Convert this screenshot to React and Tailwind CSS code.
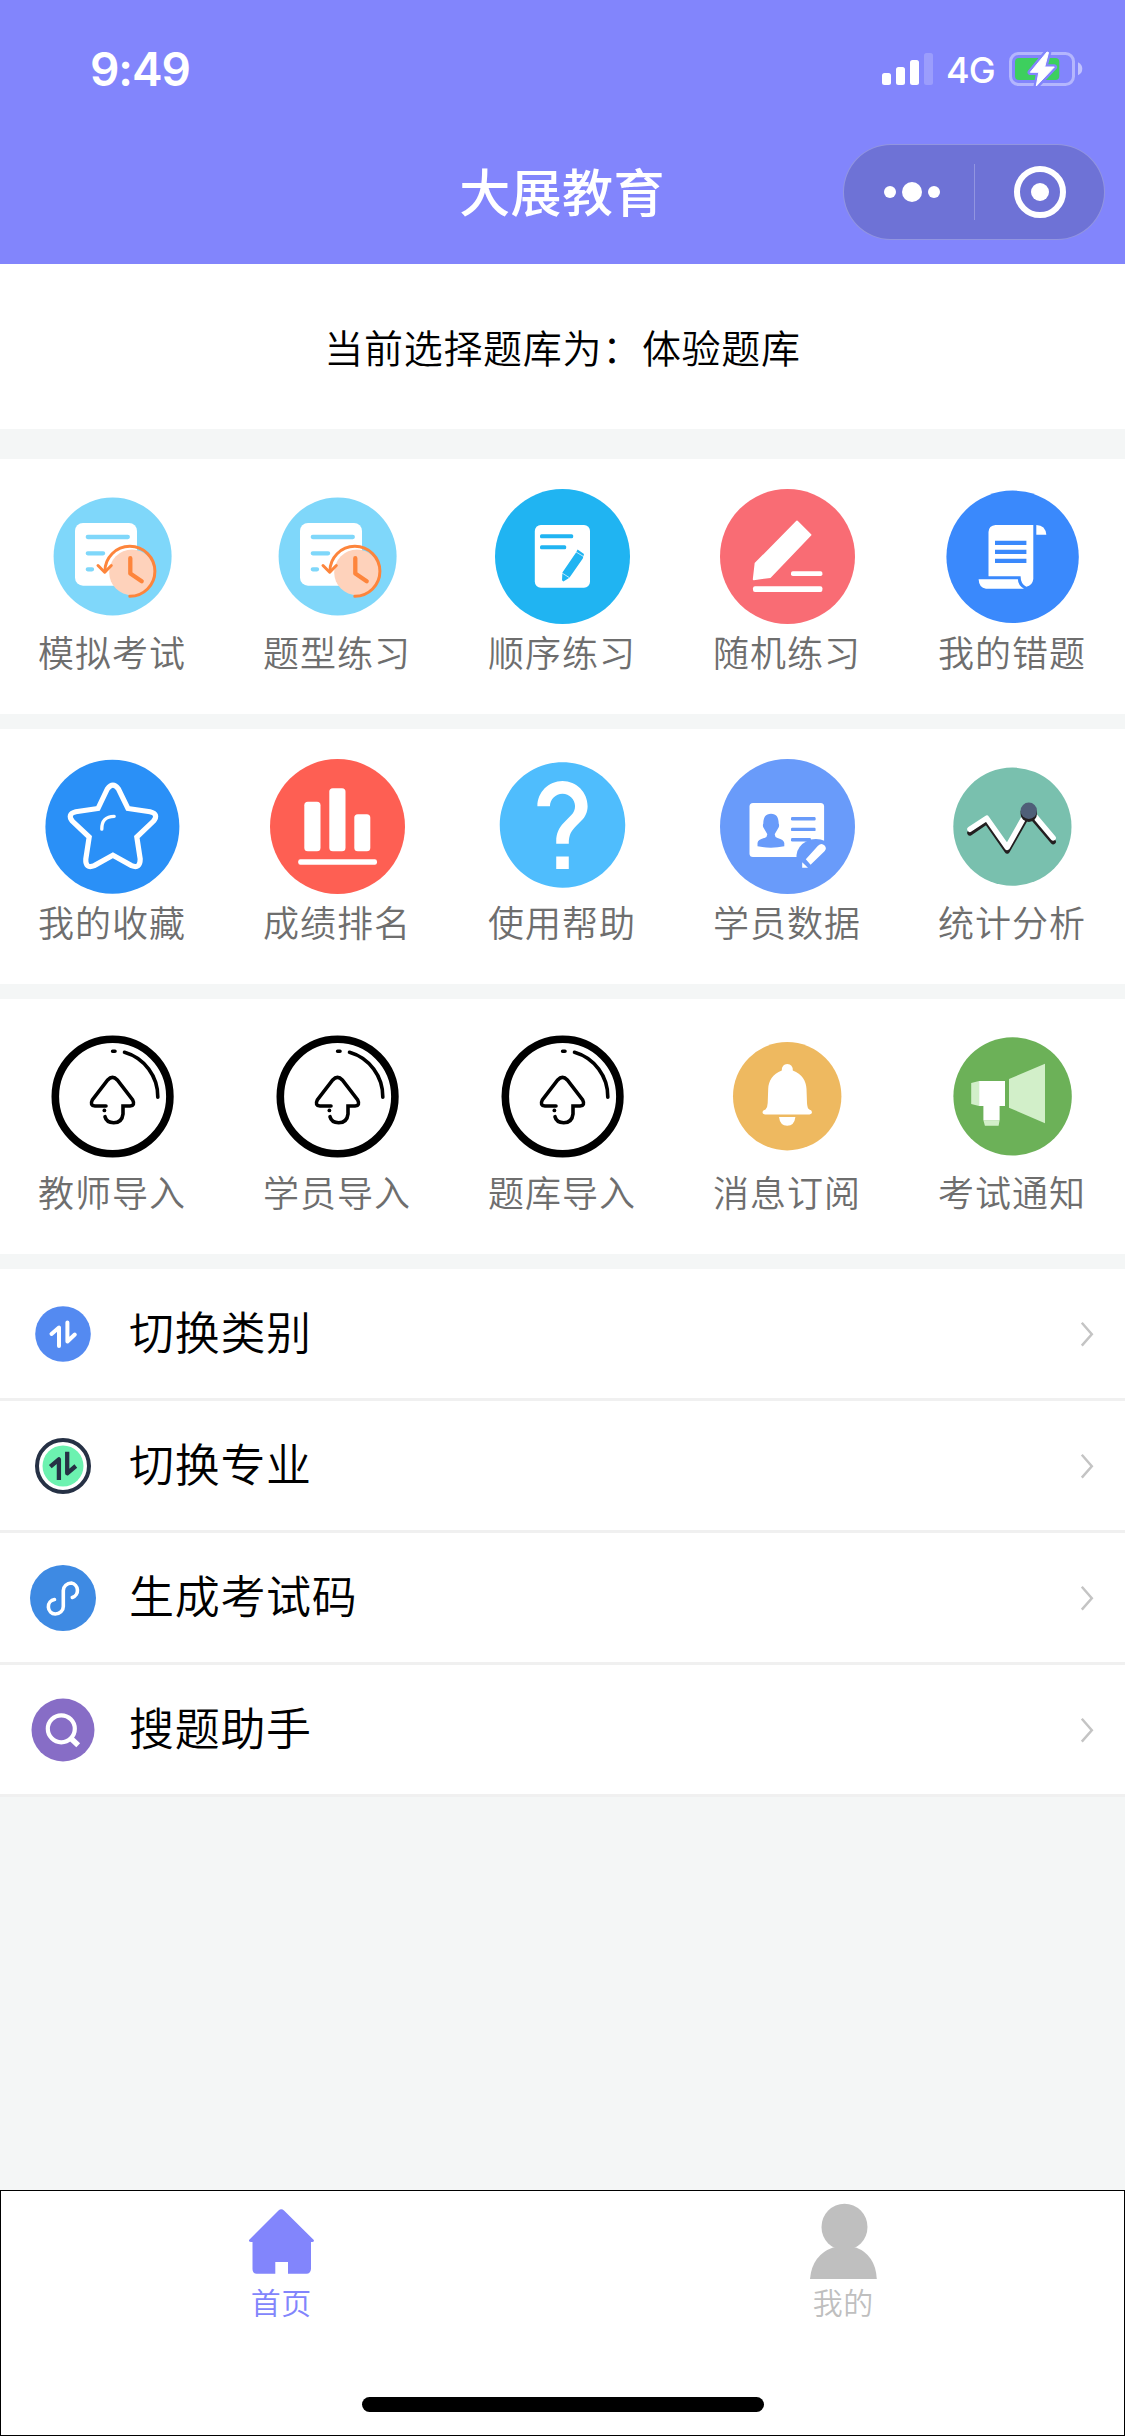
import React from 'react';
import { MdHelp } from 'react-icons/md';

const ExamIcon = () => (
    <svg className="w-[135px] h-[135px]" viewBox="0 0 135 135" fill="none" strokeLinecap="round" strokeLinejoin="round">
        <circle cx="67.6" cy="67.4" r="59" fill="#7fd7fa" />
        <rect x="30" y="34" width="62" height="62.7" rx="8" fill="#fff" />
        <path d="M42.8 48h40M42.8 64.3h15.3M42.8 80.3h4.2" stroke="#7fd7fa" strokeWidth="4.3" />
        <circle cx="87" cy="83.4" r="22.8" fill="#fed2bb" />
        <path d="M59.9 82.5A25 25 0 1 1 84.8 107.3" stroke="#fd853c" strokeWidth="3" />
        <path d="M53 76.5l6.7 6.7 6.6-6.7" stroke="#fd853c" strokeWidth="3" />
        <path d="M85.3 69.2v15.3l11.4 7.7" stroke="#fd853c" strokeWidth="4.3" />
    </svg>
);

const SequenceIcon = () => (
    <svg className="w-[135px] h-[135px]" viewBox="0 0 135 135" fill="none">
        <circle cx="67.5" cy="67.5" r="67.5" fill="#20b4f2" />
        <rect x="39.8" y="36" width="55.2" height="62.7" rx="6" fill="#fff" />
        <rect x="45" y="45.3" width="33.2" height="4" rx="1.5" fill="#20b4f2" />
        <rect x="45" y="56.3" width="26.2" height="4" rx="1.5" fill="#20b4f2" />
        <path d="M82.6 60.6l6.4 4.4-1.2 4.5-13.4 19.2-6 3.8-1.4-1.2.4-7.7 13.3-19.6z" fill="#20b4f2" />
        <path d="M80.6 62.7l8.2 5M67 84l7.6 4.8" stroke="#fff" strokeWidth="0.7" />
    </svg>
);

const RandomIcon = () => (
    <svg className="w-[135px] h-[135px]" viewBox="0 0 135 135">
        <circle cx="67.5" cy="67.5" r="67.5" fill="#f96c74" />
        <path d="M77 32.5L90.5 46 50.3 88 33.7 90.3 35.5 74.5z" fill="#fff" stroke="#fff" strokeWidth="1.8" strokeLinejoin="round" />
        <rect x="71" y="82.2" width="31.4" height="4.8" rx="1.8" fill="#fff" />
        <rect x="33" y="97.3" width="69.4" height="5.7" rx="2" fill="#fff" />
    </svg>
);

const WrongIcon = () => (
    <svg className="w-[135px] h-[135px]" viewBox="0 0 135 135">
        <circle cx="67.6" cy="67.8" r="66.2" fill="#3a89fc" />
        <path d="M50.5 36H88.3V90Q87.5 96.5 81.3 97.8Q75.6 95 75.6 87.3H43.5V43Q43.8 36.5 50.5 36z" fill="#fff" />
        <path d="M91.3 36Q100.6 36.3 101.3 45.8H91.3z" fill="#fff" />
        <path d="M33.6 90.3H72.9Q73 96.5 79 99.7H41Q34 99 33.6 90.3z" fill="#fff" />
        <path d="M50 53.8h31.4M50 62.8h31.4M50 71.8h31.4" stroke="#3a89fc" strokeWidth="4.3" />
    </svg>
);

const StarIcon = () => (
    <svg className="w-[135px] h-[135px]" viewBox="0 0 135 135" fill="none" stroke="#fff">
        <circle cx="67.4" cy="67.7" r="67" fill="#2a90f7" stroke="none" />
        <path
            d="M53 49.5L62.3 30Q67.9 22.4 73.5 30L82.9 49.5L105 52.7Q114.3 55 108.3 62.3L91.8 78L95.2 100Q95.2 110.2 86.5 106.6L67.9 96.2L49.3 106.6Q40.2 110.2 40.8 100L44.2 78L27.5 62.3Q21.7 55 30.8 52.7z"
            strokeWidth="5.2"
        />
        <path d="M56.8 70.2Q56.5 57.5 69.2 57.3" strokeWidth="3.3" strokeLinecap="round" />
    </svg>
);

const RankIcon = () => (
    <svg className="w-[135px] h-[135px]" viewBox="0 0 135 135" fill="#fff">
        <circle cx="67.5" cy="67.5" r="67.5" fill="#fe5f53" />
        <rect x="34.3" y="42.7" width="16.2" height="49.5" rx="3.5" />
        <rect x="59.3" y="29.3" width="16.2" height="62.9" rx="3.5" />
        <rect x="84.3" y="55.3" width="16" height="36.9" rx="3.5" />
        <rect x="28.2" y="100.3" width="78.8" height="5.4" rx="2.2" />
    </svg>
);

const HelpIcon = () => (
    <svg className="w-[135px] h-[135px]" viewBox="0 0 135 135">
        <MdHelp x="-7.8" y="-9.3" size="150.6" color="#4fbdfd" />
    </svg>
);

const StudentIcon = () => (
    <svg className="w-[135px] h-[135px]" viewBox="0 0 135 135">
        <circle cx="67.5" cy="67.5" r="67.5" fill="#699bfa" />
        <rect x="29.5" y="44" width="74.6" height="54" rx="3.5" fill="#fff" />
        <g fill="#699bfa">
            <path d="M51 54.8C56.5 54.8 58.6 58.5 58.7 64.5Q59.8 67 58 69.5L54.8 75Q54.5 78 57.5 79Q63.8 80.5 64.3 84V87.3Q51 90 37.5 87.3V84Q38 80.5 44.5 79Q47.5 78 47.2 75L44 69.5Q42.2 67 43.3 64.5C43.4 58.5 45.5 54.8 51 54.8z" />
            <rect x="71" y="58" width="24.6" height="3.4" rx="1.2" />
            <rect x="71" y="68.7" width="24.6" height="3.4" rx="1.2" />
            <rect x="71" y="79" width="20" height="3.4" rx="1.2" />
            <path d="M76.5 99V96A19.5 17.5 0 0 1 105 82V99z" />
        </g>
        <path d="M85.8 100.3L98 86.8Q101.5 83.5 104.6 86.6Q107.2 89.6 104.5 92.2L90.6 105.8z" fill="#fff" />
        <path d="M82.2 103.3l5.8 5.4h-5.8z" fill="#fff" />
    </svg>
);

const StatsIcon = () => (
    <svg className="w-[135px] h-[135px]" viewBox="0 0 135 135" fill="none" strokeWidth="5.4" strokeLinecap="round" strokeLinejoin="round">
        <circle cx="67.4" cy="67.7" r="59.1" fill="#79c0ae" />
        <path d="M24.9 74L41.7 62.6L62.2 92L83.8 54L108.2 82.7" stroke="#231f20" />
        <path d="M24.9 70.3L41.7 59.2L62.2 88.4L83.8 50L108.2 79" stroke="#fff" />
        <path d="M75.6 51.7v3.1a8.2 8.2 0 0 0 16.4 0v-3.1z" fill="#231f20" />
        <circle cx="83.8" cy="51.7" r="8.2" fill="#4f5f78" />
    </svg>
);

const ImportIcon = () => (
    <svg className="w-[135px] h-[135px]" viewBox="0 0 135 135" fill="none" stroke="#000" strokeWidth="3.6" strokeLinecap="round">
        <circle cx="67.6" cy="67.5" r="57.3" strokeWidth="7.6" />
        <path d="M67.6 22.3h2.4M79.5 23.3A46 46 0 0 1 112.8 68.2" />
        <path d="M61 77H50Q44.5 76.5 47.3 71L62.7 51Q67.5 45.7 72.3 51L87.7 71Q90.5 76.5 85 77H78V85Q77 93.7 68.7 93.7Q61.5 93.5 60 87.7" />
        <circle cx="59.4" cy="81.4" r="1.9" fill="#000" stroke="none" />
    </svg>
);

const BellIcon = () => (
    <svg className="w-[135px] h-[135px]" viewBox="0 0 135 135" fill="#fff">
        <circle cx="67.2" cy="67.3" r="54.2" fill="#eeb960" />
        <path d="M61.8 41.5Q61.8 35 67.3 35Q72.8 35 72.8 41.5C82 45 86.2 52 86.5 60L87 74Q87.3 79.5 89.3 80.5Q92 81 92 83.3Q92 85.3 89.5 85.5H45Q42.5 85.3 42.5 83.3Q42.7 81 45.5 80.5Q47.6 78.5 47.7 74L48.2 60C48.5 52 52.6 45 61.8 41.5z" />
        <path d="M59 88h16.4q-1 8.7-8.2 8.7t-8.2-8.7z" />
    </svg>
);

const NoticeIcon = () => (
    <svg className="w-[135px] h-[135px]" viewBox="0 0 135 135">
        <circle cx="67.6" cy="67.4" r="59.2" fill="#6cb158" />
        <path d="M26.2 54l7.9-2v25l-7.9-2zM64 50l36-15.3v59.6L64 78.7zM38.4 91.3h16.2l-1 5.4H39.9z" fill="#d2efc9" />
        <path d="M34.1 52H60v25h-5.4v14.3H38.4V77h-4.3z" fill="#fff" />
    </svg>
);

const CategoryIcon = () => (
    <svg className="w-[66px] h-[66px]" viewBox="0 0 66 66" fill="none">
        <circle cx="33" cy="33" r="27.8" fill="#548af1" />
        <path d="M21.5 33L29 26.5V45M37.4 21.5V40.5L44.8 33.5" stroke="#fff" strokeWidth="4" strokeLinecap="round" strokeLinejoin="round" />
    </svg>
);

const MajorIcon = () => (
    <svg className="w-[66px] h-[66px]" viewBox="0 0 66 66" fill="none">
        <circle cx="33" cy="33" r="26" stroke="#263145" strokeWidth="4" />
        <circle cx="33" cy="33" r="20.5" fill="#6cf2b0" />
        <path d="M20.3 33.7L28.9 26.3V47M37.2 18.7V40.3L45.8 33" stroke="#263145" strokeWidth="4.3" strokeLinejoin="round" />
    </svg>
);

const CodeIcon = () => (
    <svg className="w-[66px] h-[66px]" viewBox="0 0 66 66" fill="none">
        <circle cx="33" cy="33" r="33" fill="#3e8ae3" />
        <path d="M24.5 34.5A7.3 7.3 0 0 0 25.3 49A8 7.6 0 0 0 33.3 41.4V25.5A8 7.6 0 0 1 41.3 18A7.5 7.5 0 0 1 42.3 32.5" stroke="#fff" strokeWidth="3.6" strokeLinecap="round" />
    </svg>
);

const SearchIcon = () => (
    <svg className="w-[66px] h-[66px]" viewBox="0 0 66 66" fill="none" stroke="#fff">
        <circle cx="33" cy="33" r="31.5" fill="#876dc6" stroke="none" />
        <circle cx="31.3" cy="31.8" r="13.5" strokeWidth="4.2" />
        <path d="M41 41.5l7.2 6.8" strokeWidth="5.5" />
    </svg>
);

const rows = [
    [
        { label: '模拟考试', icon: ExamIcon },
        { label: '题型练习', icon: ExamIcon },
        { label: '顺序练习', icon: SequenceIcon },
        { label: '随机练习', icon: RandomIcon },
        { label: '我的错题', icon: WrongIcon },
    ],
    [
        { label: '我的收藏', icon: StarIcon },
        { label: '成绩排名', icon: RankIcon },
        { label: '使用帮助', icon: HelpIcon },
        { label: '学员数据', icon: StudentIcon },
        { label: '统计分析', icon: StatsIcon },
    ],
    [
        { label: '教师导入', icon: ImportIcon },
        { label: '学员导入', icon: ImportIcon },
        { label: '题库导入', icon: ImportIcon },
        { label: '消息订阅', icon: BellIcon },
        { label: '考试通知', icon: NoticeIcon },
    ],
];

const links = [
    { label: '切换类别', icon: CategoryIcon },
    { label: '切换专业', icon: MajorIcon },
    { label: '生成考试码', icon: CodeIcon },
    { label: '搜题助手', icon: SearchIcon },
];

const StatusBar = () => (
    <div className="flex items-center justify-between h-[138px] pl-[90px] pr-[42px] text-white font-['Inter',sans-serif]">
        <span className="text-[46px] leading-none font-semibold tracking-[-1.1px]">9:49</span>
        <div className="flex items-center">
            <svg className="w-[51px] h-[34px]" viewBox="0 0 51 34" fill="#fff">
                <rect y="21" width="9" height="12" rx="2.5" />
                <rect x="14" y="15" width="9" height="18" rx="2.5" />
                <rect x="28" y="8" width="9" height="25" rx="2.5" />
                <rect x="42" y="1" width="9" height="32" rx="2.5" opacity="0.2" />
            </svg>
            <span className="ml-[13px] mt-[2px] w-[51px] text-[36px] leading-none font-medium tracking-[-0.8px]">4G</span>
            <svg className="ml-[12px] w-[74px] h-[38px]" viewBox="0 0 74 38" fill="none">
                <rect x="1.5" y="3.5" width="63" height="31" rx="8" stroke="#fff" strokeOpacity="0.4" strokeWidth="3" />
                <rect x="6" y="8" width="44.3" height="22" rx="4" fill="#3dcf5e" />
                <path d="M69 12.3q4.3 2 4.3 6.5t-4.3 6.5z" fill="#fff" opacity="0.5" />
                <path d="M38 2L21.3 22.3H29.8L27.3 36L45.3 17H35.7L39.5 2.5z" fill="#fff" stroke="#8285fc" strokeWidth="5.5" strokeLinejoin="round" />
                <path d="M38 2L21.3 22.3H29.8L27.3 36L45.3 17H35.7L39.5 2.5z" fill="#fff" stroke="#fff" strokeWidth="1" strokeLinejoin="round" />
            </svg>
        </div>
    </div>
);

const NavBar = () => (
    <div className="grid grid-cols-[1fr_auto_1fr] items-center h-[108px]">
        <h1 className="col-start-2 pb-1 pr-px text-[51px] leading-none font-medium tracking-[0.4px] text-white">大展教育</h1>
        <div className="justify-self-end mr-5 flex items-center w-[262px] h-24 rounded-full border border-white/25 bg-[#6e72d6]">
            <div className="flex w-[130px] items-center justify-center gap-[6px] pl-[6px]">
                <span className="w-3 h-3 rounded-full bg-white" />
                <span className="w-5 h-5 rounded-full bg-white" />
                <span className="w-3 h-3 rounded-full bg-white" />
            </div>
            <span className="w-px h-14 bg-white/25" />
            <div className="flex flex-1 items-center justify-center">
                <span className="flex items-center justify-center w-[52px] h-[52px] rounded-full border-[6px] border-white">
                    <span className="w-[18px] h-[18px] rounded-full bg-white" />
                </span>
            </div>
        </div>
    </div>
);

const IconRow = ({ items }) => (
    <div className="grid grid-cols-5 h-[255px] pt-[30px] bg-white">
        {items.map(({ label, icon: Icon }) => (
            <div key={label} className="flex flex-col items-center">
                <Icon />
                <span className="mt-px pr-px text-[36px] leading-[52px] tracking-[1px] text-[#6e6e6e]">{label}</span>
            </div>
        ))}
    </div>
);

const LinkItem = ({ label, icon: Icon }) => (
    <div className="flex items-center h-[132px] pl-[30px] pr-[31px] bg-white border-b-[3px] border-[#f0f0f0]">
        <Icon />
        <span className="ml-[33px] flex-1 pb-[6px] text-[45px] leading-none tracking-[0.7px] text-black">{label}</span>
        <svg className="w-[14px] h-[26px]" viewBox="0 0 14 26" fill="none">
            <path d="M1.8 1.8L11.8 13.2L1.8 24.6" stroke="#c4c4c4" strokeWidth="2.5" />
        </svg>
    </div>
);

const TabBar = () => (
    <div className="flex flex-col h-[246px] border border-black bg-white">
        <div className="grid grid-cols-2 pt-[10px]">
            <div className="flex flex-col items-center text-[#8285fc]">
                <svg className="w-[81px] h-[81px]" viewBox="0 0 81 81" fill="currentColor">
                    <path d="M37.5 9.5Q40.3 7 43 9.5L72.8 39Q73.5 41.5 70 41V68Q69.5 72.7 65.5 72.7H47V61H34.3V72.7H15.5Q11.5 72.5 11.5 68V41Q7.5 41.5 8 39z" />
                </svg>
                <span className="pr-px text-[30px] leading-[39px] tracking-[0.5px]">首页</span>
            </div>
            <div className="flex flex-col items-center text-[#bfbfbf]">
                <svg className="w-[81px] h-[81px]" viewBox="0 0 81 81" fill="currentColor">
                    <ellipse cx="41.5" cy="26" rx="23" ry="23.3" />
                    <path d="M30 46.5H53Q72.5 54 73.8 78H7Q9 54 30 46.5z" />
                </svg>
                <span className="text-[30px] leading-[39px] tracking-[0.5px]">我的</span>
            </div>
        </div>
        <div className="mt-auto mb-[23px] self-center w-[402px] h-[15px] rounded-full bg-black" />
    </div>
);

export default function App() {
    return (
        <div className="flex flex-col w-[1125px] h-[2436px] bg-[#f4f6f6] font-['Noto_Sans_CJK_SC',sans-serif] font-[350]">
            <header className="h-[264px] bg-[#8285fc]">
                <StatusBar />
                <NavBar />
            </header>
            <div className="flex items-center justify-center h-[165px] mb-[30px] bg-white text-[39px] tracking-[0.7px] text-black">
                当前选择题库为：体验题库
            </div>
            <div className="flex flex-col gap-[15px]">
                {rows.map((items, i) => (
                    <IconRow key={i} items={items} />
                ))}
                <div>
                    {links.map((link) => (
                        <LinkItem key={link.label} {...link} />
                    ))}
                </div>
            </div>
            <div className="mt-auto">
                <TabBar />
            </div>
        </div>
    );
}
